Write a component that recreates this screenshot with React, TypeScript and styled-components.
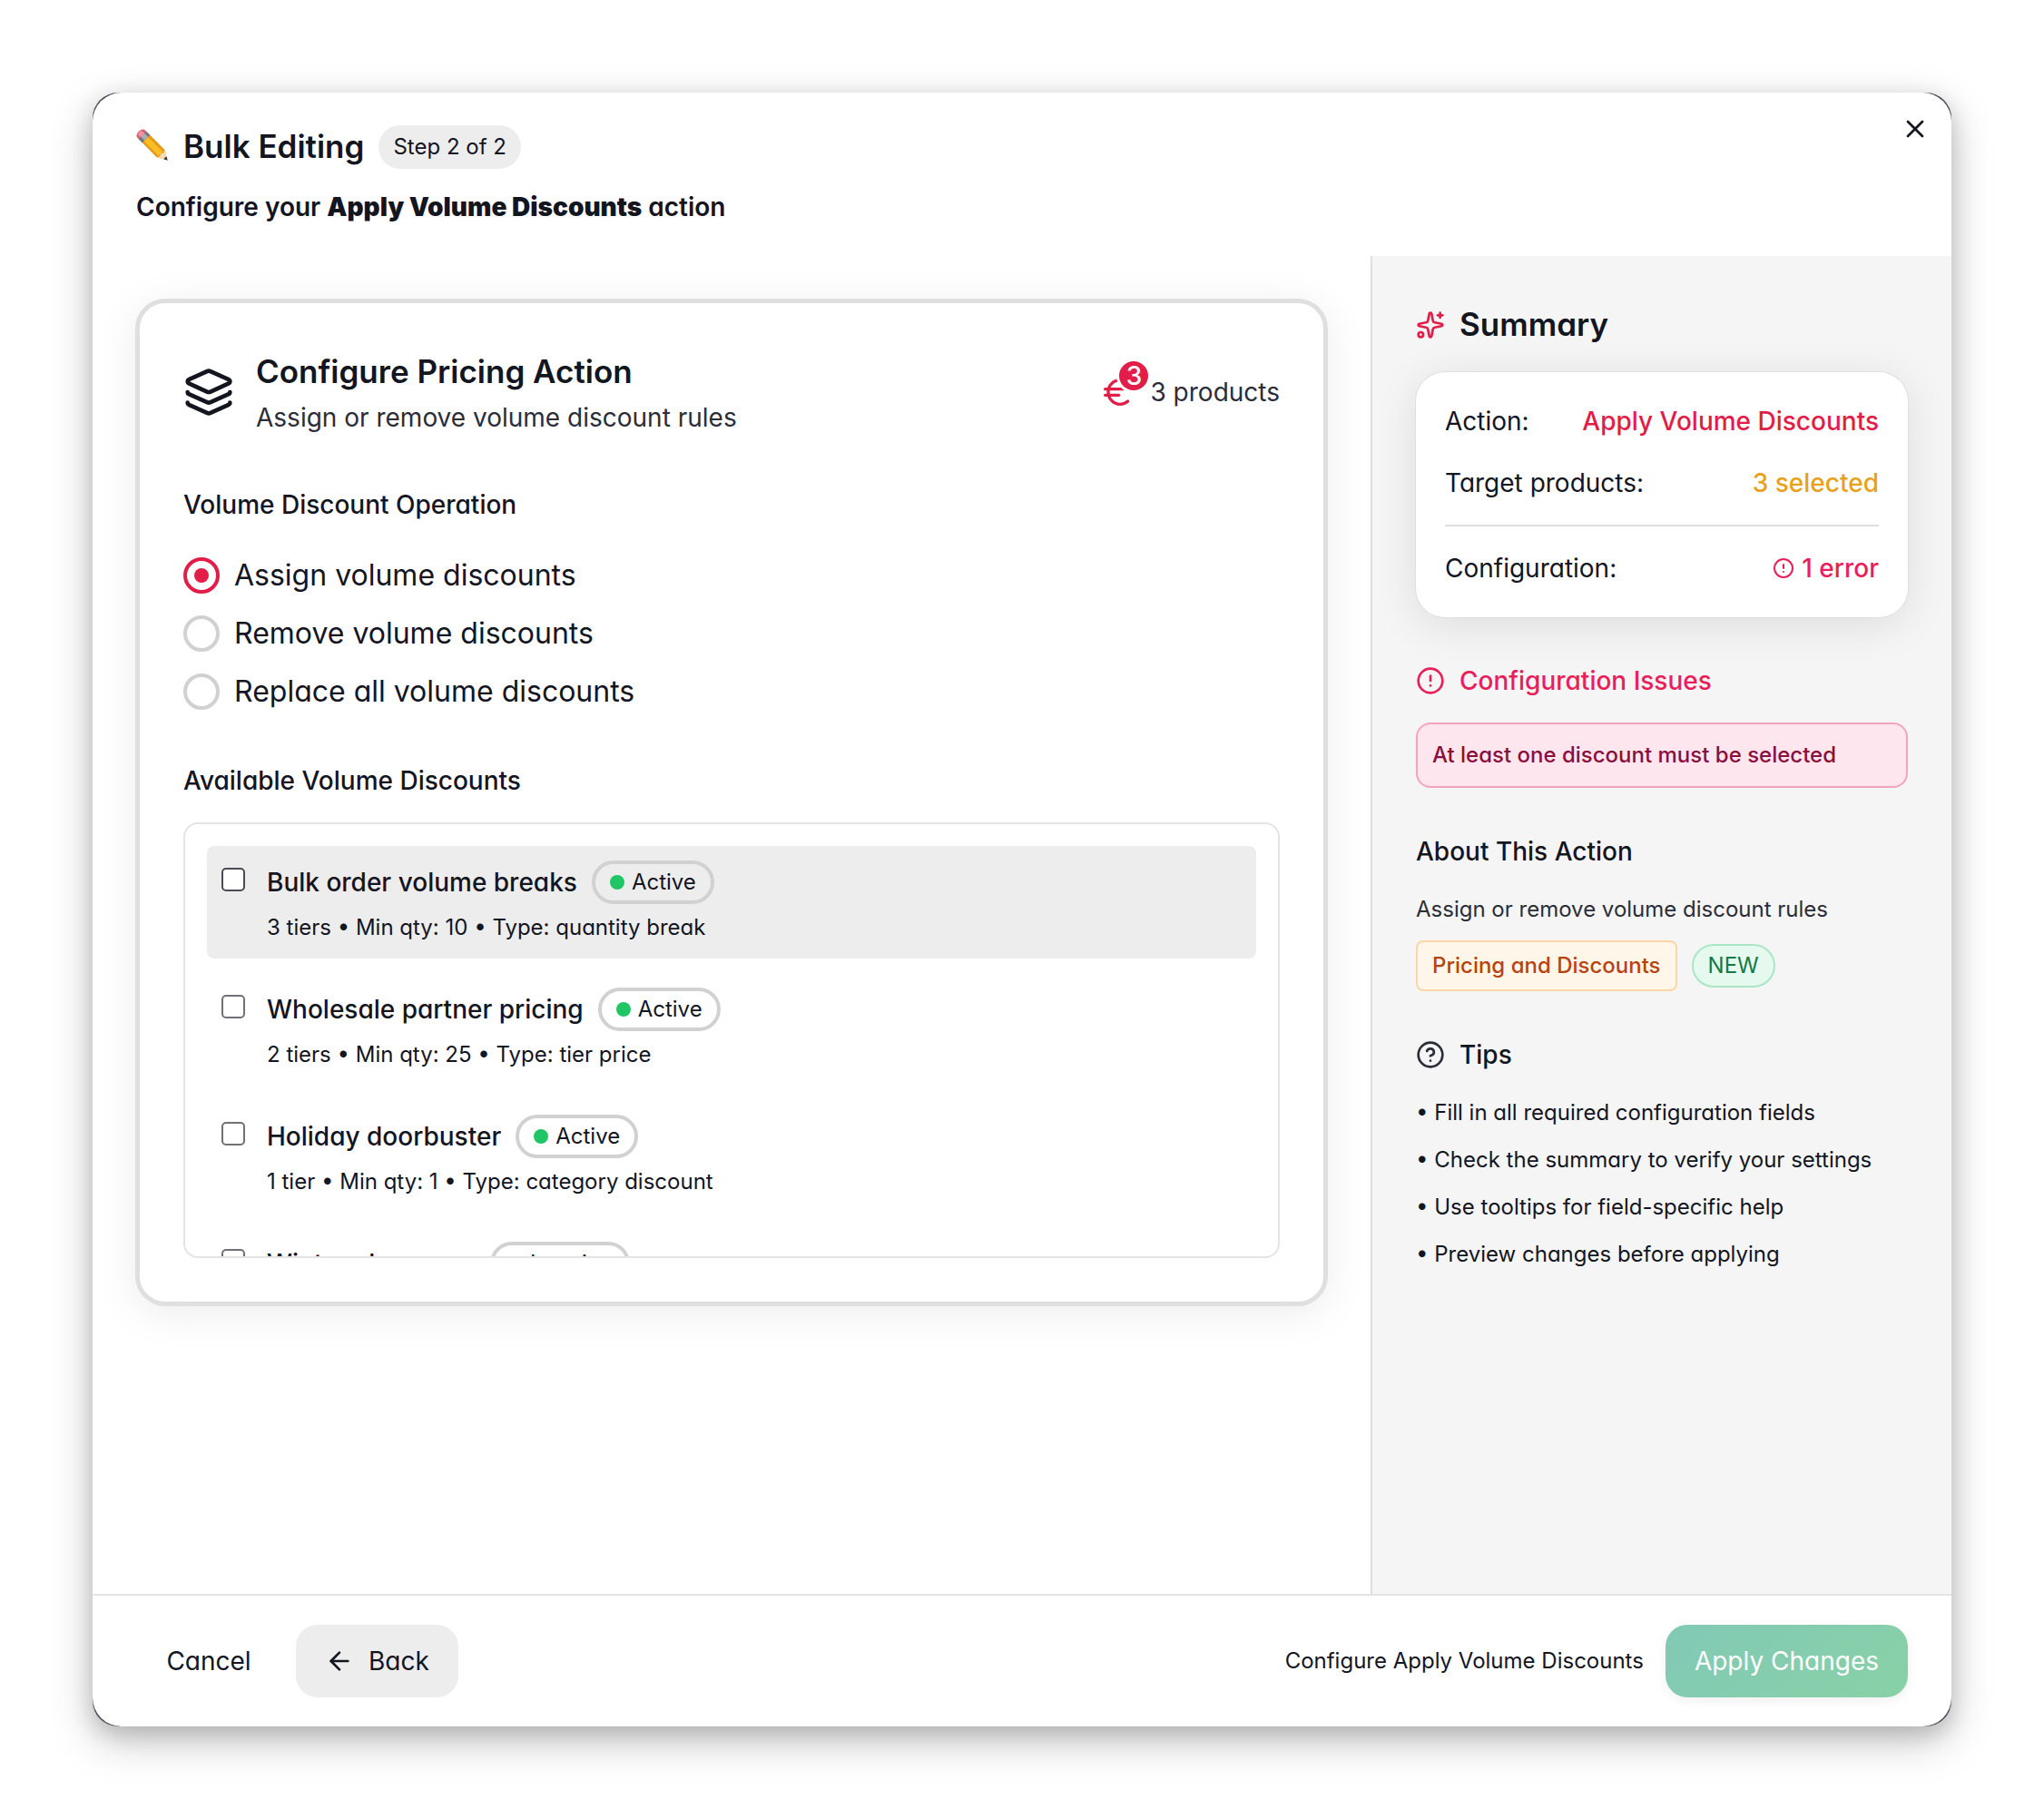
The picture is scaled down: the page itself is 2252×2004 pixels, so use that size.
import React, { useState } from "react";
import styled, { createGlobalStyle, css } from "styled-components";
import { ArrowLeft, CircleAlert, CircleHelp, Euro, Layers, X } from "lucide-react";

const ink = "#13151f";
const rose = "#e11d48";
const pink = "#e91e5a";

const GlobalStyle = createGlobalStyle`
  *, *::before, *::after { box-sizing: border-box; }
  body {
    margin: 0;
    background: #fff;
    color: ${ink};
    font-family: Inter, "Liberation Sans", sans-serif;
    font-size: 28px;
    line-height: 44px;
    font-feature-settings: "cv11";
  }
  h1, h2, h3, p, ul, fieldset { margin: 0; padding: 0; border: 0; }
  h1, h2 { padding-bottom: 2px; font-size: 35px; line-height: 54px; font-weight: 600; }
  h3 { font-size: 28px; line-height: 44px; font-weight: 500; }
  button, input { font: inherit; color: inherit; margin: 0; font-feature-settings: inherit; }
  svg { display: block; flex: none; }
`;

const Page = styled.div`
  display: flex;
  min-height: 100vh;
  padding: 102px;
`;

const Dialog = styled.section`
  position: relative;
  flex: 1;
  display: flex;
  min-width: 0;
  border-radius: 28px;
  background: #4b4e5c;
  box-shadow: 0 16px 48px rgba(0, 0, 0, 0.22), 0 8px 24px rgba(0, 0, 0, 0.16);
`;

const Surface = styled.div`
  flex: 1;
  min-width: 0;
  display: flex;
  flex-direction: column;
  background: #fff;
  border-radius: 32px;
  overflow: hidden;
`;

const CloseButton = styled.button`
  position: absolute;
  top: 24px;
  right: 24px;
  padding: 0;
  border: 0;
  background: none;
`;

const Header = styled.header`
  display: grid;
  gap: 16px;
  padding: 32px 48px;
`;

const TitleRow = styled.div`
  display: flex;
  align-items: center;
  gap: 16px;
`;

const DialogTitle = styled.h1`
  display: flex;
  align-items: center;
  gap: 14px;
`;

const StepPill = styled.span`
  padding: 6px 16px;
  border-radius: 24px;
  background: #ededee;
  font-size: 24px;
  line-height: 36px;
`;

const Subtitle = styled.p`
  font-weight: 600;
  strong { font-weight: 900; }
`;

const Body = styled.div`
  flex: 1;
  display: flex;
  align-items: stretch;
`;

const Main = styled.main`
  flex: 1;
  min-width: 0;
  padding: 48px;
`;

const Sidebar = styled.aside`
  width: 640px;
  padding: 48px;
  border-left: 2px solid #dfdfdf;
  background: #f5f5f5;
  display: flex;
  flex-direction: column;
  gap: 48px;
`;

const ConfigCard = styled.div`
  padding: 48px;
  border: 4px solid #dfdfdf;
  border-radius: 32px;
  background: #fff;
  box-shadow: 0 0 0 1px #dfdfdf, 0 8px 48px rgba(0, 0, 0, 0.08);
  display: grid;
  gap: 52px;
`;

const Form = styled.form`
  display: grid;
  gap: 56px;
  min-width: 0;
`;

const CardHead = styled.div`
  display: flex;
  align-items: center;
  gap: 24px;
`;

const CardText = styled.div`
  flex: 1;
  p { color: #2b2d38; }
`;

const ProductCount = styled.div`
  display: flex;
  align-items: center;
  gap: 16px;
  color: #2b2d38;
`;

const EuroMark = styled.span`
  position: relative;
  color: ${rose};
`;

const CountBadge = styled.span`
  position: absolute;
  top: -14px;
  right: -14px;
  width: 32px;
  height: 32px;
  border-radius: 16px;
  background: ${rose};
  box-shadow: 0 0 0 3px #fff;
  color: #fff;
  font-size: 28px;
  line-height: 32px;
  font-weight: 500;
  text-align: center;
`;

const Field = styled.fieldset`
  min-width: 0;
  legend { padding: 0; font-weight: 500; }
`;

const RadioList = styled.div`
  display: grid;
  gap: 24px;
  padding-top: 36px;
`;

const RadioLabel = styled.label`
  display: flex;
  align-items: center;
  gap: 16px;
  font-size: 32px;
  line-height: 40px;
`;

const Radio = styled.input`
  appearance: none;
  display: grid;
  place-items: center;
  width: 40px;
  height: 40px;
  border: 4px solid #d1d1d2;
  border-radius: 50%;
  background: #fff;
  &:checked { border-color: ${rose}; }
  &:checked::before {
    content: "";
    width: 16px;
    height: 16px;
    border-radius: 50%;
    background: ${rose};
  }
`;

const DiscountBox = styled.div`
  height: 480px;
  margin-top: 24px;
  padding: 24px;
  border: 2px solid #e4e4e5;
  border-radius: 16px;
  overflow-y: auto;
  scrollbar-width: none;
  display: flex;
  flex-direction: column;
  gap: 16px;
`;

const Checkbox = styled.input`
  appearance: none;
  flex: none;
  width: 26px;
  height: 26px;
  margin-top: 8px;
  border: 2px solid #6f7078;
  border-radius: 5px;
  background: #fff;
  &:checked { background: ${rose}; border-color: ${rose}; }
`;

const DiscountRow = styled.label<{ $hovered?: boolean }>`
  flex: none;
  display: flex;
  align-items: flex-start;
  gap: 24px;
  padding: 16px;
  border-radius: 8px;
  ${(p) => p.$hovered && css`
    background: #ededee;
    ${Checkbox} { border-color: #4a4b54; }
  `}
`;

const DiscountText = styled.span`
  display: grid;
  gap: 8px;
`;

const DiscountName = styled.span`
  display: flex;
  align-items: center;
  gap: 16px;
  height: 48px;
  font-weight: 500;
`;

const DiscountMeta = styled.span`
  font-size: 24px;
  line-height: 36px;
`;

const StatusPill = styled.span<{ $dot: string }>`
  display: flex;
  align-items: center;
  gap: 8px;
  height: 48px;
  padding: 0 16px;
  border: 4px solid #d1d1d2;
  border-radius: 24px;
  font-size: 24px;
  line-height: 36px;
  font-weight: 400;
  &::before {
    content: "";
    width: 16px;
    height: 16px;
    border-radius: 50%;
    background: ${(p) => p.$dot};
  }
`;

const Group = styled.section`
  display: flex;
  flex-direction: column;
  gap: 24px;
`;

const IconHeading = styled.div<{ $color?: string; $iconColor?: string }>`
  display: flex;
  align-items: center;
  gap: 16px;
  color: ${(p) => p.$color ?? ink};
  svg { color: ${(p) => p.$iconColor ?? "inherit"}; }
`;

const SummaryCard = styled.div`
  padding: 32px;
  border-radius: 32px;
  background: #fff;
  box-shadow: 0 0 0 1px #dfdfdf, 0 8px 48px rgba(0, 0, 0, 0.1);
  display: grid;
  gap: 24px;
`;

const SummaryRow = styled.div`
  display: flex;
  align-items: center;
  justify-content: space-between;
`;

const SummaryValue = styled.span<{ $color: string }>`
  display: flex;
  align-items: center;
  gap: 8px;
  font-weight: 500;
  color: ${(p) => p.$color};
`;

const Divider = styled.hr`
  width: 100%;
  height: 2px;
  margin: 0;
  border: 0;
  background: #dfdfdf;
`;

const IssueBox = styled.div`
  padding: 16px;
  border: 2px solid #f4a3bd;
  border-radius: 16px;
  background: #fde6ee;
  color: #8b0f3c;
  font-size: 24px;
  line-height: 36px;
  font-weight: 500;
`;

const AboutBody = styled.div`
  display: grid;
  gap: 16px;
  font-size: 24px;
  line-height: 36px;
  p { color: #2b2d38; }
`;

const TagRow = styled.div`
  display: flex;
  align-items: center;
  gap: 16px;
`;

const CategoryTag = styled.span`
  padding: 8px 16px;
  border: 2px solid #fbd5a5;
  border-radius: 8px;
  background: #fff6ea;
  color: #b8430f;
  font-weight: 500;
`;

const NewTag = styled.span`
  padding: 4px 16px;
  border: 2px solid #a9e6c5;
  border-radius: 24px;
  background: #e6f9ef;
  color: #157a42;
`;

const TipList = styled.ul`
  display: grid;
  gap: 16px;
  list-style: none;
  font-size: 24px;
  line-height: 36px;
  li::before { content: "• "; }
`;

const Footer = styled.footer`
  display: flex;
  align-items: center;
  gap: 16px;
  padding: 32px 48px;
  border-top: 2px solid #e4e4e5;
`;

const Button = styled.button<{ $kind: "ghost" | "soft" | "primary" }>`
  display: flex;
  align-items: center;
  justify-content: center;
  gap: 16px;
  min-width: 160px;
  height: 80px;
  padding: 0 32px;
  border: 0;
  border-radius: 24px;
  background: none;
  ${(p) => p.$kind === "soft" && css`background: #ededee;`}
  ${(p) => p.$kind === "primary" && css`
    background: linear-gradient(135deg, #82c9b6, #88d1a6);
    color: #fff;
    box-shadow: 0 4px 12px rgba(0, 0, 0, 0.06);
  `}
`;

const FooterEnd = styled.div`
  display: flex;
  align-items: center;
  gap: 24px;
  margin-left: auto;
`;

const FooterNote = styled.span`
  font-size: 24px;
  line-height: 36px;
`;

const PencilIcon = () => (
  <svg width="38" height="38" viewBox="0 0 38 38" aria-hidden="true">
    <g transform="translate(18 18) rotate(-45)">
      <path d="M-6-13H6V13L0 23-6 13Z" fill="#e39a1a" />
      <path d="M-3.500-13h6.500V13h-6.500Z" fill="#fbbd22" />
      <path d="M-6 13 0 23.500 6 13 3 14.500 0 13-3 14.500Z" fill="#f6dcb4" />
      <path d="M-2.200 19.500 0 23.700 2.200 19.500Z" fill="#33343c" />
      <path d="M-6-16H6v6H-6Z" fill="#6f757d" />
      <path d="M-2.500-16H3v6h-5.500Z" fill="#a9aeb5" />
      <path d="M-6-15.500v-2a6 4 0 0 1 12 0v2Z" fill="#d9606f" />
      <path d="M-3-15.500v-3a3 2 0 0 1 6 0v3Z" fill="#f093a0" />
    </g>
  </svg>
);

const SparkleIcon = () => (
  <svg width="32" height="32" viewBox="0 0 24 24" fill="none" stroke="currentColor" strokeWidth="2" strokeLinecap="round" strokeLinejoin="round" aria-hidden="true">
    <path d="M11.017 2.814a1 1 0 0 1 1.966 0l1.051 5.558a2 2 0 0 0 1.594 1.594l5.558 1.051a1 1 0 0 1 0 1.966l-5.558 1.051a2 2 0 0 0-1.594 1.594l-1.051 5.558a1 1 0 0 1-1.966 0l-1.051-5.558a2 2 0 0 0-1.594-1.594l-5.558-1.051a1 1 0 0 1 0-1.966l5.558-1.051a2 2 0 0 0 1.594-1.594z" />
    <path d="M20 2v4" />
    <path d="M22 4h-4" />
    <circle cx="4" cy="20" r="2" />
  </svg>
);

const operations = ["Assign volume discounts", "Remove volume discounts", "Replace all volume discounts"];

const discounts = [
  { name: "Bulk order volume breaks", meta: "3 tiers • Min qty: 10 • Type: quantity break", active: true },
  { name: "Wholesale partner pricing", meta: "2 tiers • Min qty: 25 • Type: tier price", active: true },
  { name: "Holiday doorbuster", meta: "1 tier • Min qty: 1 • Type: category discount", active: true },
  { name: "Winter clearance", meta: "2 tiers • Min qty: 5 • Type: tier price", active: false },
];

const tips = [
  "Fill in all required configuration fields",
  "Check the summary to verify your settings",
  "Use tooltips for field-specific help",
  "Preview changes before applying",
];

export default function App() {
  const [operation, setOperation] = useState(operations[0]);

  return (
    <>
      <GlobalStyle />
      <Page>
        <Dialog role="dialog" aria-labelledby="dialog-title">
          <Surface>
            <Header>
              <TitleRow>
                <DialogTitle id="dialog-title">
                  <PencilIcon />
                  Bulk Editing
                </DialogTitle>
                <StepPill>Step 2 of 2</StepPill>
              </TitleRow>
              <Subtitle>
                Configure your <strong>Apply Volume Discounts</strong> action
              </Subtitle>
            </Header>

            <Body>
              <Main>
                <ConfigCard>
                  <CardHead>
                    <Layers size={56} />
                    <CardText>
                      <h2>Configure Pricing Action</h2>
                      <p>Assign or remove volume discount rules</p>
                    </CardText>
                    <ProductCount>
                      <EuroMark>
                        <Euro size={40} />
                        <CountBadge>3</CountBadge>
                      </EuroMark>
                      3 products
                    </ProductCount>
                  </CardHead>

                  <Form>
                    <Field>
                      <legend>Volume Discount Operation</legend>
                      <RadioList>
                        {operations.map((name) => (
                          <RadioLabel key={name}>
                            <Radio
                              type="radio"
                              name="operation"
                              checked={operation === name}
                              onChange={() => setOperation(name)}
                            />
                            {name}
                          </RadioLabel>
                        ))}
                      </RadioList>
                    </Field>

                    <Field>
                      <legend>Available Volume Discounts</legend>
                      <DiscountBox>
                        {discounts.map((d, i) => (
                          <DiscountRow key={d.name} $hovered={i === 0}>
                            <Checkbox type="checkbox" />
                            <DiscountText>
                              <DiscountName>
                                {d.name}
                                <StatusPill $dot={d.active ? "#20c566" : "#9a9ba1"}>
                                  {d.active ? "Active" : "Inactive"}
                                </StatusPill>
                              </DiscountName>
                              <DiscountMeta>{d.meta}</DiscountMeta>
                            </DiscountText>
                          </DiscountRow>
                        ))}
                      </DiscountBox>
                    </Field>
                  </Form>
                </ConfigCard>
              </Main>

              <Sidebar>
                <Group>
                  <IconHeading $iconColor={rose}>
                    <SparkleIcon />
                    <h2>Summary</h2>
                  </IconHeading>
                  <SummaryCard>
                    <SummaryRow>
                      Action:
                      <SummaryValue $color={rose}>Apply Volume Discounts</SummaryValue>
                    </SummaryRow>
                    <SummaryRow>
                      Target products:
                      <SummaryValue $color="#e8a11c">3 selected</SummaryValue>
                    </SummaryRow>
                    <Divider />
                    <SummaryRow>
                      Configuration:
                      <SummaryValue $color={pink}>
                        <CircleAlert size={24} />
                        1 error
                      </SummaryValue>
                    </SummaryRow>
                  </SummaryCard>
                </Group>

                <Group>
                  <IconHeading $color={pink}>
                    <CircleAlert size={32} />
                    <h3>Configuration Issues</h3>
                  </IconHeading>
                  <IssueBox>At least one discount must be selected</IssueBox>
                </Group>

                <Group>
                  <h3>About This Action</h3>
                  <AboutBody>
                    <p>Assign or remove volume discount rules</p>
                    <TagRow>
                      <CategoryTag>Pricing and Discounts</CategoryTag>
                      <NewTag>NEW</NewTag>
                    </TagRow>
                  </AboutBody>
                </Group>

                <Group>
                  <IconHeading $iconColor="#2b2d38">
                    <CircleHelp size={32} />
                    <h3>Tips</h3>
                  </IconHeading>
                  <TipList>
                    {tips.map((tip) => (
                      <li key={tip}>{tip}</li>
                    ))}
                  </TipList>
                </Group>
              </Sidebar>
            </Body>

            <Footer>
              <Button type="button" $kind="ghost">Cancel</Button>
              <Button type="button" $kind="soft">
                <ArrowLeft size={32} />
                Back
              </Button>
              <FooterEnd>
                <FooterNote>Configure Apply Volume Discounts</FooterNote>
                <Button type="button" $kind="primary">Apply Changes</Button>
              </FooterEnd>
            </Footer>
          </Surface>
          <CloseButton type="button" aria-label="Close">
            <X size={32} />
          </CloseButton>
        </Dialog>
      </Page>
    </>
  );
}
